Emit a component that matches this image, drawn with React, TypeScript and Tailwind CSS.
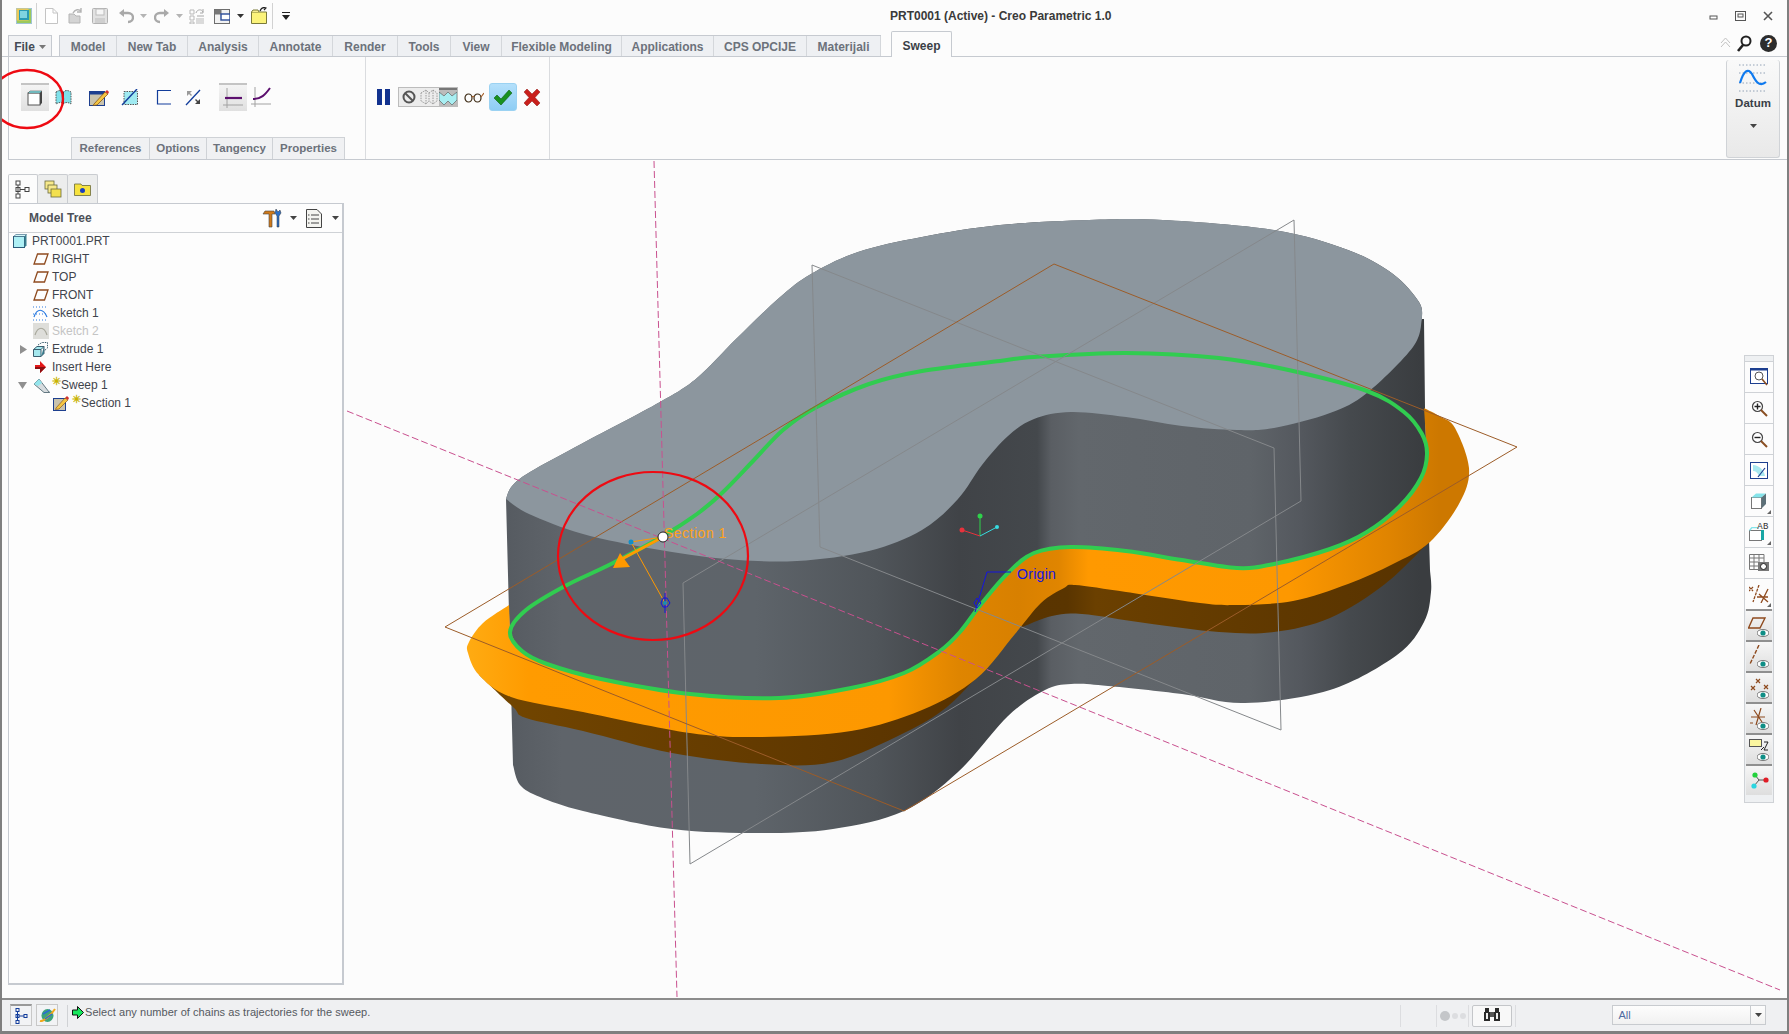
import type { ReactNode } from 'react';

type Pt = [number, number];

function spline(p: Pt[]) {
  let d = '';
  for (let i = 0; i < p.length - 1; i++) {
    const a = p[i - 1] || p[i];
    const b = p[i];
    const c = p[i + 1];
    const e = p[i + 2] || c;
    d += `C${b[0] + (c[0] - a[0]) / 6} ${b[1] + (c[1] - a[1]) / 6} ${c[0] - (e[0] - b[0]) / 6} ${c[1] - (e[1] - b[1]) / 6} ${c[0]} ${c[1]} `;
  }
  return d;
}

function closedSpline(p: Pt[]) {
  const n = p.length;
  let d = `M${p[0][0]} ${p[0][1]} `;
  for (let i = 0; i < n; i++) {
    const a = p[(i - 1 + n) % n];
    const b = p[i];
    const c = p[(i + 1) % n];
    const e = p[(i + 2) % n];
    d += `C${b[0] + (c[0] - a[0]) / 6} ${b[1] + (c[1] - a[1]) / 6} ${c[0] - (e[0] - b[0]) / 6} ${c[1] - (e[1] - b[1]) / 6} ${c[0]} ${c[1]} `;
  }
  return d + 'Z';
}

const topBack: Pt[] = [[506, 499], [512, 486], [530, 472], [583, 443], [660, 402], [697, 378], [736, 339], [779, 298], [811, 274], [858, 252], [922, 237], [1000, 225], [1089, 220], [1163, 220], [1274, 230], [1348, 250], [1393, 274], [1419, 302], [1422, 319]];
const topFront: Pt[] = [[1422, 319], [1413, 347], [1367, 393], [1330, 413], [1274, 428], [1237, 430], [1182, 426], [1126, 417], [1071, 412], [1034, 419], [1008, 436], [982, 465], [958, 499], [922, 530], [869, 551], [797, 561], [726, 559], [654, 549], [583, 534], [529, 514], [506, 499]];
const bottom: Pt[] = [[1430, 570], [1431, 592], [1424, 622], [1397, 655], [1330, 690], [1245, 703], [1182, 694], [1108, 686], [1071, 684], [1045, 690], [1008, 716], [958, 772], [904, 811], [833, 829], [761, 833], [672, 829], [583, 811], [540, 797], [520, 785], [513, 765]];
const greenFront: Pt[] = [[1427, 454], [1421, 478], [1400, 506], [1367, 532], [1330, 549], [1274, 564], [1237, 568], [1182, 560], [1126, 551], [1071, 547], [1034, 553], [1008, 573], [982, 603], [960, 632], [940, 651], [904, 673], [851, 688], [779, 698], [690, 694], [601, 679], [547, 664], [522, 651], [510, 632]];
const greenBack: Pt[] = [[526, 610], [565, 586], [611, 564], [663, 536], [697, 514], [722, 493], [754, 460], [783, 430], [815, 408], [869, 384], [922, 371], [1000, 361], [1034, 357], [1126, 353], [1219, 358], [1293, 371], [1367, 391], [1404, 412], [1422, 434]];
const orangeOuter: Pt[] = [[509, 605], [483, 623], [469, 642], [468, 653], [479, 675], [511, 697], [583, 712], [690, 733], [761, 737], [851, 731], [922, 710], [976, 679], [1015, 634], [1041, 603], [1064, 588], [1075, 585], [1126, 592], [1200, 603], [1237, 605], [1293, 601], [1348, 584], [1393, 564], [1430, 542], [1460, 502], [1469, 468], [1455, 428], [1441, 417], [1424, 408]];
const brownLeft: Pt[] = [[479, 675], [513, 707], [526, 718], [583, 731], [672, 753], [761, 764], [833, 762], [904, 733], [947, 707], [985, 668]];
const brownRight: Pt[] = [[1020, 628], [1052, 616], [1082, 614], [1145, 623], [1219, 632], [1274, 632], [1330, 618], [1385, 584], [1428, 543]];

const bodyPath = `M506 499 ${spline(topBack)}L1424 319 L1425 408 L1430 570 ${spline(bottom)}Z`;
const topPath = `M506 499 ${spline(topBack)}${spline(topFront)}Z`;
const orangePath = `M509 605 ${spline(orangeOuter)}L1427 454 ${spline(greenFront)}Z`;

function ModelView() {
  return (
    <svg className="absolute inset-0" width="1785" height="838" viewBox="2 160 1785 838" fill="none">
      <defs>
        <linearGradient id="wall" gradientUnits="userSpaceOnUse" x1="506" y1="0" x2="1430" y2="0">
          <stop offset="0" stopColor="#565b61" />
          <stop offset="0.06" stopColor="#5f646a" />
          <stop offset="0.27" stopColor="#5e646a" />
          <stop offset="0.4" stopColor="#50555a" />
          <stop offset="0.49" stopColor="#404347" />
          <stop offset="0.575" stopColor="#44484c" />
          <stop offset="0.59" stopColor="#5a5e63" />
          <stop offset="0.62" stopColor="#62676c" />
          <stop offset="0.805" stopColor="#5f6469" />
          <stop offset="0.86" stopColor="#54585e" />
          <stop offset="0.915" stopColor="#45494d" />
          <stop offset="0.99" stopColor="#3a3d40" />
        </linearGradient>
        <linearGradient id="flange" gradientUnits="userSpaceOnUse" x1="468" y1="0" x2="1469" y2="0">
          <stop offset="0" stopColor="#ffab12" />
          <stop offset="0.06" stopColor="#ff9b00" />
          <stop offset="0.42" stopColor="#fd9800" />
          <stop offset="0.49" stopColor="#df8500" />
          <stop offset="0.55" stopColor="#d88000" />
          <stop offset="0.59" stopColor="#e08500" />
          <stop offset="0.62" stopColor="#ff9900" />
          <stop offset="0.82" stopColor="#fd9800" />
          <stop offset="0.92" stopColor="#e08400" />
          <stop offset="0.97" stopColor="#cd7800" />
        </linearGradient>
        <linearGradient id="under" gradientUnits="userSpaceOnUse" x1="479" y1="0" x2="1428" y2="0">
          <stop offset="0" stopColor="#734600" />
          <stop offset="0.5" stopColor="#593300" />
          <stop offset="0.62" stopColor="#5a3500" />
          <stop offset="0.65" stopColor="#6b4000" />
          <stop offset="0.85" stopColor="#5f3800" />
          <stop offset="1" stopColor="#583300" />
        </linearGradient>
      </defs>

      <path d={bodyPath} fill="url(#wall)" />
      <path d={`M479 675 ${spline(brownLeft)}L976 679 L851 731 L690 733 Z`} fill="url(#under)" />
      <path d={`M1020 628 ${spline(brownRight)}L1393 560 L1293 595 L1200 598 L1075 580 L1041 598 Z`} fill="url(#under)" />
      <path d={orangePath} fill="url(#flange)" />
      <path d={topPath} fill="#8c969e" />
      <path d={closedSpline([...greenFront, ...greenBack])} stroke="#31cc50" strokeWidth="4" />

      {/* datum planes */}
      <path d="M812 265 L1274 448 L1281 730 L820 547 Z" stroke="#85888b" strokeWidth="1" />
      <path d="M1294 220 L1301 501 L690 864 L683 583 Z" stroke="#85888b" strokeWidth="1" />
      <path d="M1054 264 L1517 447 L904 811 L445 627 Z" stroke="#9c5c28" strokeWidth="1" />

      {/* axes */}
      <path d="M654 161 L677 997" stroke="#c9508f" strokeWidth="1" strokeDasharray="7 3" />
      <path d="M347 411 L1780 990" stroke="#c9508f" strokeWidth="1" strokeDasharray="7 3" />

      {/* section handle */}
      <ellipse cx="653" cy="556" rx="95" ry="84" stroke="#ee0a12" strokeWidth="2.2" />
      <path d="M631 542 L663 537 M663 537 L626 557 M631 542 L665 603" stroke="#ff9900" strokeWidth="1" />
      <path d="M663 537 L620 560" stroke="#ff9900" strokeWidth="3" />
      <path d="M613 568 L620 553 L630 567 Z" fill="#ff9900" />
      <circle cx="631" cy="542" r="2.5" fill="#0f8fc8" />
      <path d="M665 593 V613 M661 603 L663 598 H667 L670 603 L667 607 H663 Z" stroke="#1414e0" strokeWidth="1" />
      <circle cx="665" cy="603" r="2" fill="#1a8fb0" />
      <text x="664" y="538" fontFamily="Liberation Sans" fontSize="14" letterSpacing="0.5" fill="#ffa31a">Section 1</text>
      <circle cx="663" cy="537" r="5" fill="#fff" stroke="#222" strokeWidth="1" />

      {/* origin */}
      <path d="M1011 572 H987 L975 612" stroke="#1414e0" strokeWidth="1" />
      <path d="M977 598 L981 603 L977 608 L974 603 Z" stroke="#1414e0" strokeWidth="1" />
      <text x="1017" y="579" fontFamily="Liberation Sans" fontSize="14" letterSpacing="0.3" fill="#1414e0">Origin</text>

      {/* csys */}
      <path d="M980 536 V516" stroke="#2fd14b" strokeWidth="1" />
      <path d="M980 536 L962 530" stroke="#e8323c" strokeWidth="1" />
      <path d="M980 536 L997 527" stroke="#37dbe0" strokeWidth="1" />
      <circle cx="980" cy="516" r="2.5" fill="#2fd14b" />
      <circle cx="962" cy="530" r="2.5" fill="#e8323c" />
      <circle cx="997" cy="527" r="2" fill="#37dbe0" />
    </svg>
  );
}

function Ic({ w = 16, h = 16, children }: { w?: number; h?: number; children: ReactNode }) {
  return (
    <svg width={w} height={h} viewBox={`0 0 ${w} ${h}`} fill="none" className="shrink-0">
      {children}
    </svg>
  );
}

const Caret = ({ color = '#333' }: { color?: string }) => (
  <svg width="7" height="4" viewBox="0 0 7 4" className="shrink-0">
    <path d="M0 0H7L3.5 4Z" fill={color} />
  </svg>
);

function QuickBar() {
  return (
    <div className="flex h-full w-[888px] items-center pl-[14px]">
      <Ic>
        <rect x="0.5" y="0.5" width="15" height="15" fill="#9bc95c" stroke="#9fc4d4" />
        <rect x="0.5" y="0.5" width="12" height="12" fill="#e9c95a" />
        <rect x="3" y="2" width="10" height="10" fill="#2a9bb5" />
        <rect x="4" y="3" width="7" height="7" fill="#7fd4e0" />
      </Ic>
      <div className="ml-1 mr-2 h-[26px] w-px bg-[#d2d2d2]" />
      <Ic w={13} h={16}>
        <path d="M0.5 0.5H8L12.5 5V15.5H0.5Z" fill="#fff" stroke="#c4c4c4" />
        <path d="M8 0.5V5H12.5" stroke="#c4c4c4" />
      </Ic>
      <div className="ml-[10px]">
        <Ic>
          <path d="M1 6H6L8 8H12V15H1Z" fill="#d4d4d4" stroke="#b4b4b4" />
          <path d="M5 5C7 1 11 1 13 3M13 0V4H9" stroke="#b4b4b4" strokeWidth="1.4" />
        </Ic>
      </div>
      <div className="ml-2">
        <Ic>
          <rect x="0.5" y="0.5" width="15" height="15" rx="1" fill="#e2e2e2" stroke="#b2b2b2" />
          <rect x="4" y="1" width="8" height="6" fill="#f6f6f6" stroke="#bcbcbc" />
          <rect x="3" y="10" width="10" height="5" fill="#cfcfcf" />
        </Ic>
      </div>
      <div className="ml-[10px]">
        <Ic>
          <path d="M4 5H10C13 5 15 7 15 9.5S13 14 10 14" stroke="#a9a9a9" strokeWidth="2.4" />
          <path d="M1 5L6 1V9Z" fill="#a9a9a9" />
        </Ic>
      </div>
      <div className="ml-[6px]"><Caret color="#b4b4b4" /></div>
      <div className="ml-[7px]">
        <Ic>
          <path d="M12 5H6C3 5 1 7 1 9.5S3 14 6 14" stroke="#a9a9a9" strokeWidth="2.4" />
          <path d="M15 5L10 1V9Z" fill="#a9a9a9" />
        </Ic>
      </div>
      <div className="ml-[6px]"><Caret color="#b4b4b4" /></div>
      <div className="ml-[6px]">
        <Ic>
          <path d="M1 2H5V6H1ZM1 8H5V12H1ZM1 14H5V16H1ZM7 11H15M7 13H15M7 15H15" stroke="#b9b9b9" />
          <path d="M7 5C8 1 13 1 14 4M14 1V5H11M8 8H15" stroke="#a8a8a8" />
        </Ic>
      </div>
      <div className="ml-[9px]">
        <Ic>
          <rect x="0.5" y="1.5" width="15" height="14" fill="#f2f2f2" stroke="#6d6d6d" />
          <rect x="0.5" y="1.5" width="7" height="5" fill="#777" />
          <rect x="7" y="6" width="9" height="6" fill="#fff" stroke="#2a4b98" strokeWidth="1.4" />
        </Ic>
      </div>
      <div className="ml-[7px]"><Caret /></div>
      <div className="ml-[7px]">
        <Ic h={17}>
          <path d="M0.5 5H15.5V16.5H0.5Z" fill="#fbf37a" stroke="#7a7a3a" />
          <path d="M0.5 5L2 3H7L8 5" fill="#f5ec90" stroke="#7a7a3a" />
          <path d="M9 4C10 1 12 0 15 1M12 0L15 1L13 3" stroke="#222" strokeWidth="1.2" />
        </Ic>
      </div>
      <div className="ml-[5px] h-[26px] w-px bg-[#d2d2d2]" />
      <div className="ml-[9px]">
        <svg width="8" height="8" viewBox="0 0 8 8">
          <path d="M0 0H8V1H0ZM0 3H8L4 8Z" fill="#222" />
        </svg>
      </div>
    </div>
  );
}

function WindowButtons() {
  return (
    <div className="ml-[598px] flex items-center gap-[17px] text-[#555]">
      <svg width="9" height="9" viewBox="0 0 9 9"><rect x="1" y="5" width="7" height="3" fill="#fff" stroke="#555" /></svg>
      <svg width="11" height="10" viewBox="0 0 11 10"><rect x="0.5" y="0.5" width="10" height="9" stroke="#555" fill="none" /><rect x="3" y="3" width="5" height="3" stroke="#555" fill="none" /></svg>
      <svg width="10" height="10" viewBox="0 0 10 10"><path d="M1 1L9 9M9 1L1 9" stroke="#555" strokeWidth="1.6" /></svg>
    </div>
  );
}

const mainTabs = [
  { label: 'Model', cls: 'w-[57px]' },
  { label: 'New Tab', cls: 'w-[71px]' },
  { label: 'Analysis', cls: 'w-[71px]' },
  { label: 'Annotate', cls: 'w-[74px]' },
  { label: 'Render', cls: 'w-[65px]' },
  { label: 'Tools', cls: 'w-[53px]' },
  { label: 'View', cls: 'w-[51px]' },
  { label: 'Flexible Modeling', cls: 'w-[120px]' },
  { label: 'Applications', cls: 'w-[92px]' },
  { label: 'CPS OPCIJE', cls: 'w-[93px]' },
  { label: 'Materijali', cls: 'w-[74px]' },
];

function TabRow() {
  return (
    <div className="relative z-10 flex h-[21px] items-end border-b border-[#c6cad0] pl-[6px]">
      <div className="flex h-[21px] w-[44px] items-center justify-center gap-1 border-x border-t border-[#c6cad0] bg-[#f1f2f4] pt-px text-[12px] font-bold text-[#444b55]">
        File <Caret color="#777" />
      </div>
      <div className="ml-[7px] flex border-t border-l border-[#c6cad0]">
        {mainTabs.map((t) => (
          <div
            key={t.label}
            className={`flex h-[20px] items-center justify-center border-r border-[#d4d7db] bg-[#eef0f3] pt-px text-[12px] font-bold text-[#6c727b] ${t.cls}`}
          >
            {t.label}
          </div>
        ))}
      </div>
      <div className="relative -mb-px ml-[10px] flex h-[26px] w-[61px] items-center justify-center rounded-t-[2px] border-x border-t border-[#c6cad0] bg-[#fcfcfc] pt-[3px] text-[12px] font-bold text-[#3a3f46]">
        Sweep
      </div>
      <div className="ml-auto mr-[10px] flex h-[21px] items-center pb-[5px]">
        <svg width="11" height="12" viewBox="0 0 11 12"><path d="M1 6L5.5 1L10 6M1 10L5.5 5L10 10" stroke="#c2c2c2" fill="none" /></svg>
        <svg width="15" height="17" viewBox="0 0 15 17" className="ml-[6px]"><circle cx="9" cy="6" r="4.5" stroke="#222" strokeWidth="2" fill="none" /><path d="M6 10L1 16" stroke="#222" strokeWidth="2.6" /></svg>
        <div className="ml-[8px] flex h-[17px] w-[17px] items-center justify-center rounded-full bg-[#2c2c2c] text-[13px] font-bold text-white">?</div>
      </div>
    </div>
  );
}

function Cell({ cls = '', active, children }: { cls?: string; active?: boolean; children: ReactNode }) {
  return (
    <div
      className={`flex h-[28px] w-[28px] shrink-0 items-center justify-center ${active ? 'border-t-2 border-[#c4c4c4] bg-gradient-to-b from-[#f4f4f4] to-[#e0e0e0]' : ''} ${cls}`}
    >
      {children}
    </div>
  );
}

const subTabs = [
  { label: 'References', cls: 'w-[78px]' },
  { label: 'Options', cls: 'w-[57px]' },
  { label: 'Tangency', cls: 'w-[66px]' },
  { label: 'Properties', cls: 'w-[73px]' },
];

function SweepGroup() {
  return (
    <div className="flex w-[357px] flex-col border-r border-[#dadcdf] pt-[26px]">
      <div className="flex h-[28px] items-center pl-[12px]">
        <Cell active>
          <Ic>
            <rect x="1" y="3" width="12" height="12" fill="#fff" stroke="#555" />
            <path d="M1 3L3 1H15L13 3Z" fill="#7ce3e8" stroke="#555" strokeWidth="0.6" />
            <path d="M13 3L15 1V13L13 15Z" fill="#444" />
          </Ic>
        </Cell>
        <Cell>
          <Ic w={17}>
            <path d="M1 3C4 1 7 1 8.5 3C10 1 13 1 16 3V15C13 13 10 13 8.5 15C7 13 4 13 1 15Z" fill="#7fe1ea" stroke="#555" strokeDasharray="1.5 1" />
            <path d="M8.5 3V15" stroke="#333" />
          </Ic>
        </Cell>
        <Cell cls="ml-[8px]">
          <svg width="20" height="17" viewBox="0 0 20 17">
            <rect x="0.5" y="2.5" width="15" height="14" fill="#c9c3ae" stroke="#1d3f8f" />
            <rect x="0.5" y="2.5" width="15" height="3" fill="#1d3f8f" />
            <path d="M5 15L16 3L19 5L8 16L4 16.5Z" fill="#f5c542" stroke="#7a4a10" strokeWidth="0.7" />
            <path d="M16 3L18 1L20 3L19 5Z" fill="#d2312a" />
          </svg>
        </Cell>
        <Cell cls="ml-[3px]">
          <Ic w={18} h={17}>
            <path d="M3 2.5H16.5V15.5H3Z" fill="#9feaf1" stroke="#555" strokeDasharray="1.5 1" />
            <path d="M1 16L16 0" stroke="#123d9b" strokeWidth="1.4" />
          </Ic>
        </Cell>
        <Cell cls="ml-[6px]">
          <Ic>
            <path d="M15 1.5H1.5V15H15" stroke="#123d9b" strokeWidth="1.2" />
          </Ic>
        </Cell>
        <Cell cls="ml-px">
          <Ic h={17}>
            <path d="M1 16L15 1" stroke="#123d9b" strokeWidth="1.3" />
            <path d="M2 2H7L5 4L7 6L6 7L4 5L2 7Z" fill="#9a9a9a" />
            <path d="M15 15H10L12 13L10 11L11 10L13 12L15 10Z" fill="#444" />
          </Ic>
        </Cell>
        <Cell cls="ml-[12px]" active>
          <svg width="20" height="20" viewBox="0 0 20 20">
            <path d="M4 0V20M0 17H20" stroke="#a2a2a2" />
            <path d="M2 10H19" stroke="#5c0f6e" strokeWidth="2.2" />
          </svg>
        </Cell>
        <Cell>
          <svg width="20" height="20" viewBox="0 0 20 20">
            <path d="M4 0V20M0 17H20" stroke="#a2a2a2" />
            <path d="M2 12C10 12 14 8 19 1" stroke="#5c0f6e" strokeWidth="2" fill="none" />
          </svg>
        </Cell>
      </div>
      <div className="mt-auto ml-[62px] flex h-[22px]">
        {subTabs.map((t) => (
          <div
            key={t.label}
            className={`flex items-center justify-center border-t border-l border-[#cfd2d6] bg-[#f0f1f3] pt-px text-[11.5px] font-bold text-[#6c727b] last:border-r ${t.cls}`}
          >
            {t.label}
          </div>
        ))}
      </div>
    </div>
  );
}

function ActionGroup() {
  return (
    <div className="flex w-[184px] border-r border-[#dadcdf] pt-[26px] pl-[11px]">
      <div className="flex h-[28px] items-center">
        <svg width="13" height="16" viewBox="0 0 13 16"><rect width="5" height="16" fill="#12328f" /><rect x="8" width="5" height="16" fill="#12328f" /></svg>
        <div className="ml-[8px] flex h-[20px] w-[60px] border border-[#bcbcbc] bg-[#ececec]">
          <div className="flex w-[20px] items-center justify-center">
            <svg width="14" height="14" viewBox="0 0 14 14"><circle cx="7" cy="7" r="5.5" fill="none" stroke="#555" strokeWidth="2" /><path d="M3 3L11 11" stroke="#555" strokeWidth="2" /></svg>
          </div>
          <div className="flex w-[20px] items-center justify-center">
            <svg width="18" height="16" viewBox="0 0 18 16" fill="none" stroke="#888" strokeWidth="0.8"><path d="M1 4L6 1L9 4L13 1L17 4V12L13 15L9 12L6 15L1 12ZM6 1V15M13 1V15M9 4V12" strokeDasharray="1.5 1" /></svg>
          </div>
          <div className="flex w-[18px] items-center justify-center border-t-2 border-[#777] bg-[#bcbcbc]">
            <svg width="18" height="14" viewBox="0 0 18 14"><path d="M0 1L5 5L9 1L13 5L18 1V9L13 14L9 10L5 14L0 9Z" fill="#a9eef2" stroke="#555" strokeWidth="0.6" /></svg>
          </div>
        </div>
        <div className="ml-[6px]">
          <svg width="20" height="12" viewBox="0 0 20 12" fill="none" stroke="#3c2a14" strokeWidth="1.2"><ellipse cx="4.5" cy="7" rx="3.5" ry="4" /><ellipse cx="13.5" cy="7" rx="3.5" ry="4" /><path d="M8 6C9 5 9.5 5 10 6M17 6L20 2" stroke="#a5602a" /></svg>
        </div>
        <div className="ml-[5px] flex h-[28px] w-[28px] items-center justify-center rounded-[3px] border border-[#9bd2f2] bg-gradient-to-b from-[#b4e0fb] to-[#8ecdf4]">
          <svg width="20" height="17" viewBox="0 0 20 17"><path d="M1 9L4 6L8 10L16 1L19 4L8 16Z" fill="#17911f" stroke="#0d5c14" strokeWidth="0.6" /></svg>
        </div>
        <div className="ml-[6px]">
          <svg width="18" height="17" viewBox="0 0 18 17"><path d="M1 3L4 0L9 5L14 0L17 3L12 8.5L17 14L14 17L9 12L4 17L1 14L6 8.5Z" fill="#c9201c" stroke="#8c1410" strokeWidth="0.5" /></svg>
        </div>
      </div>
    </div>
  );
}

function DatumButton() {
  return (
    <div className="mt-[3px] mb-[1px] mr-[7px] ml-auto flex w-[54px] flex-col items-center rounded-[3px] border-x border-b border-[#d0d3d7] bg-gradient-to-b from-[#f9f9f9] to-[#e9e9e9]">
      <svg width="30" height="28" viewBox="0 0 30 28" className="mt-[4px]" fill="none">
        <path d="M1 1H29M1 27H29M1 9H29M1 19H29" stroke="#7a8ea6" strokeWidth="0.8" strokeDasharray="1.5 2" />
        <path d="M2 19C6 6 10 4 14 10C17 16 21 24 28 18" stroke="#0f7aef" strokeWidth="2.2" />
      </svg>
      <div className="mt-[3px] text-[11.5px] font-bold text-[#3a3f46]">Datum</div>
      <div className="mt-[12px]"><Caret color="#444" /></div>
    </div>
  );
}

const PlaneIcon = () => (
  <Ic w={16} h={12}>
    <path d="M4.5 1H15L11.5 11H1Z" stroke="#8e4a1e" strokeWidth="1.3" fill="#fdfdfd" />
  </Ic>
);

function TreeRow({ indent, arrow, icon, muted, label }: { indent: string; arrow?: 'right' | 'down'; icon: ReactNode; muted?: boolean; label: string }) {
  return (
    <div className={`relative flex h-[18px] items-center ${indent}`}>
      {arrow === 'right' && (
        <svg width="7" height="9" viewBox="0 0 7 9" className="absolute left-[11px]"><path d="M0 0L7 4.5L0 9Z" fill="#909090" /></svg>
      )}
      {arrow === 'down' && (
        <svg width="9" height="7" viewBox="0 0 9 7" className="absolute left-[9px]"><path d="M0 0H9L4.5 7Z" fill="#909090" /></svg>
      )}
      <div className="flex w-[19px] items-center">{icon}</div>
      <span className={`text-[12px] ${muted ? 'text-[#c4c4c4]' : 'text-[#3f444c]'}`}>{label}</span>
    </div>
  );
}

const PencilBox = () => (
  <svg width="16" height="15" viewBox="0 0 16 15">
    <rect x="0.5" y="2.5" width="12" height="12" fill="#c9c3ae" stroke="#1d3f8f" />
    <path d="M3 12L12 2L15 4L6 13L2.5 13.5Z" fill="#f5c542" stroke="#7a4a10" strokeWidth="0.6" />
    <path d="M12 2L14 0L16 2L15 4Z" fill="#d2312a" />
  </svg>
);

function ModelTree() {
  return (
    <div className="relative z-10 flex w-[336px] flex-col">
      <div className="flex h-[29px] items-end">
        <div className="flex h-[29px] w-[30px] items-center justify-center rounded-t-[2px] border-x border-t border-[#c9ccd0] bg-[#fcfcfc]">
          <svg width="16" height="19" viewBox="0 0 16 19" fill="none" stroke="#444"><rect x="1" y="1" width="4" height="4" /><rect x="1" y="7.5" width="4" height="4" /><rect x="1" y="14" width="4" height="4" /><rect x="10" y="7.5" width="4" height="4" /><path d="M3 5V14M5 9.5H10" /></svg>
        </div>
        <div className="flex h-[29px] w-[30px] items-center justify-center rounded-t-[2px] border-t border-r border-[#c9ccd0] bg-[#eceded]">
          <svg width="18" height="18" viewBox="0 0 18 18" stroke="#6a6a3a" strokeWidth="0.8"><rect x="1" y="1" width="9" height="8" fill="#f7e98a" /><rect x="4" y="5" width="9" height="8" fill="#f7e98a" /><rect x="7" y="9" width="10" height="8" fill="#f3e04e" /></svg>
        </div>
        <div className="flex h-[29px] w-[30px] items-center justify-center rounded-t-[2px] border-t border-r border-[#c9ccd0] bg-[#eceded]">
          <svg width="17" height="14" viewBox="0 0 17 14" stroke="#6a6a3a" strokeWidth="0.8"><path d="M0.5 2H7L8 3.5H16.5V13.5H0.5Z" fill="#f6e23e" /><circle cx="8.5" cy="8.5" r="2.5" fill="#1a3fbf" stroke="none" /></svg>
        </div>
      </div>
      <div className="flex flex-1 flex-col border-t border-l border-r-2 border-b-2 border-[#c6cad0] bg-[#fdfdfd]">
        <div className="flex h-[29px] shrink-0 items-center border-b border-[#cfd2d6] pl-[20px] pr-[3px]">
          <span className="text-[12px] font-bold text-[#4c5058]">Model Tree</span>
          <svg width="20" height="19" viewBox="0 0 20 19" className="ml-auto">
            <path d="M7 18V5H1L3 2H12L13 5H10V18Z" fill="#d07a1a" stroke="#444" strokeWidth="0.6" />
            <path d="M15 18V7L13 4L14 0L16 3L18 1L19 4L17 7V18Z" fill="#2a6fc9" stroke="#333" strokeWidth="0.5" />
          </svg>
          <div className="ml-[8px]"><Caret color="#444" /></div>
          <svg width="16" height="19" viewBox="0 0 16 19" fill="#f4f4f0" stroke="#444" className="ml-[9px]"><path d="M0.5 0.5H11L15.5 5V18.5H0.5Z" /><path d="M5 6H13M5 10H13M5 14H13M2 6H3.5M2 10H3.5M2 14H3.5" fill="none" /></svg>
          <div className="ml-[10px]"><Caret color="#444" /></div>
        </div>
        <div className="-mt-px">
          <TreeRow
            indent="pl-[4px]"
            label="PRT0001.PRT"
            icon={
              <svg width="14" height="14" viewBox="0 0 14 14">
                <rect x="0.5" y="2.5" width="11" height="11" fill="#aef0f5" stroke="#2b5b7a" />
                <path d="M0.5 2.5L3 0.5H13.5L11.5 2.5Z" fill="#d4f8fa" stroke="#2b5b7a" strokeWidth="0.6" />
                <path d="M11.5 2.5L13.5 0.5V11.5L11.5 13.5Z" fill="#3a7f8f" />
              </svg>
            }
          />
          <TreeRow indent="pl-[24px]" label="RIGHT" icon={<PlaneIcon />} />
          <TreeRow indent="pl-[24px]" label="TOP" icon={<PlaneIcon />} />
          <TreeRow indent="pl-[24px]" label="FRONT" icon={<PlaneIcon />} />
          <TreeRow
            indent="pl-[24px]"
            label="Sketch 1"
            icon={
              <svg width="15" height="15" viewBox="0 0 15 15" fill="none">
                <path d="M0 1H15M0 8H15M0 14H15" stroke="#2a7ae0" strokeDasharray="1 2" />
                <path d="M1 11C4 2 10 2 14 11" stroke="#2a7ae0" strokeWidth="1.2" />
              </svg>
            }
          />
          <TreeRow
            indent="pl-[24px]"
            muted
            label="Sketch 2"
            icon={
              <svg width="16" height="16" viewBox="0 0 16 16" fill="none">
                <rect width="16" height="16" fill="#dededa" />
                <path d="M2 12C5 3 11 3 14 12" stroke="#a8a89c" strokeWidth="1.2" />
              </svg>
            }
          />
          <TreeRow
            indent="pl-[24px]"
            arrow="right"
            label="Extrude 1"
            icon={
              <svg width="15" height="15" viewBox="0 0 15 15" fill="none" stroke="#3c5f70">
                <path d="M0.5 7.5H8V14.5H0.5ZM0.5 7.5L4 4.5H11L8 7.5" fill="#a5e8ee" />
                <path d="M8 14.5L11 11.5V4.5" fill="#3c8a9a" />
                <path d="M5 3L9 0.5H14.5V6L11 9" strokeDasharray="1.5 1" />
              </svg>
            }
          />
          <TreeRow
            indent="pl-[24px]"
            label="Insert Here"
            icon={
              <svg width="11" height="12" viewBox="0 0 11 12" className="ml-[2px]">
                <path d="M0 4H5V0L11 6L5 12V8H0Z" fill="#e4181a" />
                <path d="M5 8V12L11 6H0V8Z" fill="#8c0f12" />
              </svg>
            }
          />
          <div className="relative flex h-[18px] items-center pl-[24px]">
            <svg width="9" height="7" viewBox="0 0 9 7" className="absolute left-[9px]"><path d="M0 0H9L4.5 7Z" fill="#909090" /></svg>
            <svg width="17" height="15" viewBox="0 0 17 15" className="shrink-0">
              <path d="M1 6L6 1L16 14H16.5V14.5H11Z" fill="#d6dbde" stroke="#405a66" strokeWidth="0.8" />
              <path d="M1 6L6 1L9 5L5 8Z" fill="#93e5ec" />
            </svg>
            <span className="ml-[2px] self-start text-[11px] leading-[11px] font-bold text-[#c9b400]">✳</span>
            <span className="text-[12px] text-[#3f444c]">Sweep 1</span>
          </div>
          <div className="flex h-[18px] items-center pl-[44px]">
            <PencilBox />
            <span className="ml-[3px] self-start text-[11px] leading-[11px] font-bold text-[#c9b400]">✳</span>
            <span className="text-[12px] text-[#3f444c]">Section 1</span>
          </div>
        </div>
      </div>
    </div>
  );
}

const Lens = ({ sign }: { sign?: '+' | '-' }) => (
  <svg width="17" height="17" viewBox="0 0 17 17" fill="none">
    <circle cx="6.5" cy="6.5" r="5" fill="#fff" stroke="#444" strokeWidth="1.2" />
    <path d="M10 10L16 16" stroke="#8a4f22" strokeWidth="2" />
    {sign && <path d={sign === '+' ? 'M3.5 6.5H9.5M6.5 3.5V9.5' : 'M3.5 6.5H9.5'} stroke="#222" strokeWidth="1.4" />}
  </svg>
);

const Eye = () => (
  <svg width="12" height="8" viewBox="0 0 12 8" className="absolute right-[3px] bottom-[3px]">
    <ellipse cx="6" cy="4" rx="6" ry="3.5" fill="#fff" stroke="#444" strokeWidth="0.7" />
    <circle cx="6" cy="4" r="2.6" fill="#0f8e86" />
  </svg>
);

const Corner = () => (
  <svg width="4" height="4" viewBox="0 0 4 4" className="absolute right-[2px] bottom-[2px]"><path d="M4 0V4H0Z" fill="#666" /></svg>
);

const stars = 'M2 2L6 6M6 2L2 6';

const toolButtons: { icon: ReactNode; on?: boolean; eye?: boolean; corner?: boolean }[] = [
  {
    icon: (
      <svg width="18" height="18" viewBox="0 0 18 18" fill="none">
        <rect x="0.5" y="0.5" width="17" height="15" fill="#fff" stroke="#1d3f8f" />
        <rect x="0.5" y="0.5" width="17" height="2" fill="#1d3f8f" />
        <circle cx="9" cy="8" r="4" stroke="#555" />
        <path d="M12 11L17 17" stroke="#8a4f22" strokeWidth="1.6" />
      </svg>
    ),
  },
  { icon: <Lens sign="+" /> },
  { icon: <Lens sign="-" /> },
  {
    icon: (
      <svg width="18" height="17" viewBox="0 0 18 17">
        <rect x="0.5" y="0.5" width="17" height="16" fill="#fff" stroke="#1d3f8f" />
        <path d="M3 3C9 3 14 8 15 14H9C8 11 6 9 3 9Z" fill="#a8e8f0" />
        <path d="M8 15L15 6" stroke="#1d3f8f" strokeWidth="1.2" />
      </svg>
    ),
  },
  {
    corner: true,
    icon: (
      <svg width="16" height="16" viewBox="0 0 16 16">
        <rect x="0.5" y="4.5" width="10" height="11" fill="#fff" stroke="#777" />
        <path d="M0.5 4.5L5 0.5H15L10.5 4.5Z" fill="#85e4ea" />
        <path d="M10.5 4.5L15 0.5V11L10.5 15.5Z" fill="#5c7078" />
      </svg>
    ),
  },
  {
    corner: true,
    icon: (
      <div className="relative h-[17px] w-[20px]">
        <svg width="15" height="14" viewBox="0 0 15 14" className="absolute bottom-0 left-0">
          <rect x="0.5" y="3.5" width="12" height="10" fill="#fff" stroke="#777" />
          <path d="M0.5 3.5L3 0.5H9" stroke="#85e4ea" strokeWidth="1.4" fill="none" />
          <rect x="12" y="3" width="3" height="10" fill="#18a6a4" />
        </svg>
        <span className="absolute -top-[3px] right-0 text-[9px] tracking-[0.5px] text-[#333] [font-family:'Liberation_Mono',monospace]">AB</span>
      </div>
    ),
  },
  {
    icon: (
      <svg width="20" height="18" viewBox="0 0 20 18" fill="none">
        <path d="M0.5 0.5H15V12M0.5 0.5V15.5H9M0.5 4H15M0.5 8H9M0.5 12H9M5 0.5V15M10 0.5V8" stroke="#777" />
        <rect x="9" y="8" width="11" height="9" fill="#777" />
        <circle cx="14.5" cy="12.5" r="3" fill="#fff" stroke="#222" />
      </svg>
    ),
  },
  {
    corner: true,
    icon: (
      <svg width="20" height="18" viewBox="0 0 20 18" fill="none" stroke="#8e4a1e" strokeWidth="1.3">
        <path d="M0 2L4 6M4 2L0 6M10 0L4 17" strokeDasharray="3 1" />
        <path d="M10 9L19 17M19 4L12 18M8 12H19" />
      </svg>
    ),
  },
  { on: true, eye: true, icon: <svg width="18" height="12" viewBox="0 0 18 12" className="-mt-[5px] -ml-[4px]"><path d="M5 1H17L12 11H0.5Z" fill="none" stroke="#8e4a1e" strokeWidth="1.4" /></svg> },
  { on: true, eye: true, icon: <svg width="12" height="19" viewBox="0 0 12 19" className="-mt-[4px] -ml-[8px]"><path d="M10 0L1 19" stroke="#8e4a1e" strokeWidth="1.4" strokeDasharray="4 1.5" /></svg> },
  {
    on: true,
    eye: true,
    icon: (
      <svg width="20" height="18" viewBox="0 0 20 18" className="-mt-[3px] -ml-[1px]" fill="none" stroke="#8e4a1e" strokeWidth="1.2">
        <path transform="translate(5 0)" d={stars} />
        <path transform="translate(0 7)" d={stars} />
        <path transform="translate(13 6)" d={stars} />
      </svg>
    ),
  },
  {
    on: true,
    eye: true,
    icon: (
      <svg width="20" height="18" viewBox="0 0 20 18" className="-mt-[3px] -ml-[2px]" fill="none" stroke="#8e4a1e" strokeWidth="1.2">
        <path d="M3 9H17M13 0L8 17M6 2L14 14M2 15H5" />
      </svg>
    ),
  },
  {
    on: true,
    eye: true,
    icon: (
      <svg width="20" height="19" viewBox="0 0 20 19" className="-mt-[3px] -ml-[1px]" fill="none">
        <rect x="0.5" y="0.5" width="12" height="7" fill="#fbf6a0" stroke="#555" />
        <path d="M15 3H19L15 11H19M15 8L12 11" stroke="#222" />
      </svg>
    ),
  },
  {
    on: true,
    icon: (
      <svg width="20" height="17" viewBox="0 0 20 17" fill="none">
        <path d="M6 3L10 8H17M10 8L5 14" stroke="#555" />
        <circle cx="6" cy="3" r="2.6" fill="#22d13c" />
        <circle cx="17" cy="8" r="2.6" fill="#e01c26" />
        <circle cx="5" cy="14" r="2.6" fill="#2bd5e0" />
      </svg>
    ),
  },
];

function ViewToolbar() {
  return (
    <div className="relative z-10 mr-[13px] mt-[181px] flex h-[448px] w-[30px] flex-col self-start border border-[#cfd2d6] bg-[#eef0f2]">
      <div className="h-[5px] shrink-0" />
      {toolButtons.map((b, i) => (
        <div
          key={i}
          className={`relative flex h-[31px] shrink-0 items-center justify-center border-t border-[#cfd2d6] ${
            b.on ? 'mx-[1px] border-t-2 border-t-[#8f8f8f] bg-gradient-to-b from-[#f6f6f6] to-[#dedede]' : 'bg-[#fcfcfc]'
          }`}
        >
          {b.icon}
          {b.eye && <Eye />}
          {b.corner && <Corner />}
        </div>
      ))}
    </div>
  );
}

function StatusBar() {
  return (
    <div className="flex h-[33px] shrink-0 items-center border-t-2 border-[#8c8c8c] bg-[#eff0f2]">
      <div className="ml-[8px] -mt-px flex h-[22px] w-[22px] items-center justify-center border border-[#c8c8c8] border-t-2 border-t-[#999] bg-[#f2f3f5]">
        <svg width="13" height="16" viewBox="0 0 13 16" fill="none" stroke="#123d9b"><rect x="1" y="0.5" width="3" height="3" /><rect x="1" y="6.5" width="3" height="3" /><rect x="1" y="12.5" width="3" height="3" /><rect x="9" y="6.5" width="3" height="3" /><path d="M2.5 3.5V12.5M4 8H9" /></svg>
      </div>
      <div className="ml-[4px] -mt-px flex h-[22px] w-[22px] items-center justify-center border border-[#c8c8c8] bg-[#f2f3f5]">
        <svg width="17" height="17" viewBox="0 0 17 17"><ellipse cx="8.5" cy="8.5" rx="6" ry="6.5" fill="#3da37b" /><path d="M1 14C4 15 12 8 16 2" stroke="#f0a81a" strokeWidth="2" fill="none" /><path d="M4 7L11 3M6 12L13 7" stroke="#2c6cd0" strokeWidth="1.5" /></svg>
      </div>
      <div className="ml-[9px] h-[22px] w-px bg-[#d0d2d5]" />
      <svg width="12" height="13" viewBox="0 0 12 13" className="ml-[4px] -mt-[7px]"><path d="M0.5 4H5.5V0.5L11.5 6.5L5.5 12.5V9H0.5Z" fill="#16e85c" stroke="#111" /></svg>
      <span className="ml-[1px] -mt-[6px] text-[11px] tracking-[0.05px] text-[#55595f]">Select any number of chains as trajectories for the sweep.</span>
      <div className="ml-[1030px] h-[22px] w-px bg-[#dcdde0]" />
      <div className="ml-[35px] h-[22px] w-px bg-[#dcdde0]" />
      <div className="ml-[3px] flex w-[28px] items-center gap-[2px]">
        <div className="h-[10px] w-[10px] rounded-full bg-[#c4c6c9]" />
        <div className="h-[6px] w-[6px] rounded-full bg-[#dcdde0]" />
        <div className="h-[6px] w-[6px] rounded-full bg-[#dcdde0]" />
      </div>
      <div className="h-[22px] w-px bg-[#dcdde0]" />
      <div className="ml-[3px] flex h-[22px] w-[40px] items-center justify-center rounded-[2px] border border-[#c4c6c9] bg-[#f8f8f8]">
        <svg width="18" height="15" viewBox="0 0 18 15"><path d="M2 0H6V4H7V13H1V4H2ZM12 0H16V4H17V13H11V4H12Z" fill="#2a2a2a" /><rect x="7" y="4" width="4" height="5" fill="#555" /><rect x="3" y="5" width="2" height="6" fill="#eee" /><rect x="13" y="5" width="2" height="6" fill="#eee" /></svg>
      </div>
      <div className="ml-[3px] h-[22px] w-px bg-[#dcdde0]" />
      <div className="ml-[96px] -mt-px flex h-[20px] w-[154px] items-center border border-[#c8cbcf] bg-gradient-to-b from-[#fdfdfd] to-[#f1f1f1] pl-[5px]">
        <span className="text-[11px] text-[#4f6aa0]">All</span>
        <div className="ml-auto flex h-full w-[15px] items-center justify-center border-l border-[#c8cbcf]"><Caret color="#444" /></div>
      </div>
    </div>
  );
}

export default function App() {
  return (
    <div className="relative flex h-[1034px] w-[1789px] flex-col overflow-hidden border-x-2 border-b-[3px] border-[#7f7f7f] bg-[#fcfcfc] [font-family:'Liberation_Sans',sans-serif]">
      <div className="flex h-[36px] shrink-0 items-center pb-[5px]">
        <QuickBar />
        <span className="w-[221px] shrink-0 text-[12px] font-bold whitespace-nowrap text-[#3a3a3a]">PRT0001 (Active) - Creo Parametric 1.0</span>
        <WindowButtons />
      </div>
      <TabRow />
      <div className="relative ml-[6px] flex h-[103px] shrink-0 border-b border-l border-[#c6cad0]">
        <SweepGroup />
        <ActionGroup />
        <DatumButton />
        <svg width="70" height="75" viewBox="2 57 70 75" className="pointer-events-none absolute top-0 -left-[7px] z-20" fill="none">
          <ellipse cx="27" cy="99" rx="36" ry="29" stroke="#ee0a12" strokeWidth="2.4" />
        </svg>
      </div>
      <div className="relative flex min-h-0 flex-1 pt-[14px] pb-[13px] pl-[6px]">
        <ModelView />
        <ModelTree />
        <div className="flex-1" />
        <ViewToolbar />
      </div>
      <StatusBar />
    </div>
  );
}
